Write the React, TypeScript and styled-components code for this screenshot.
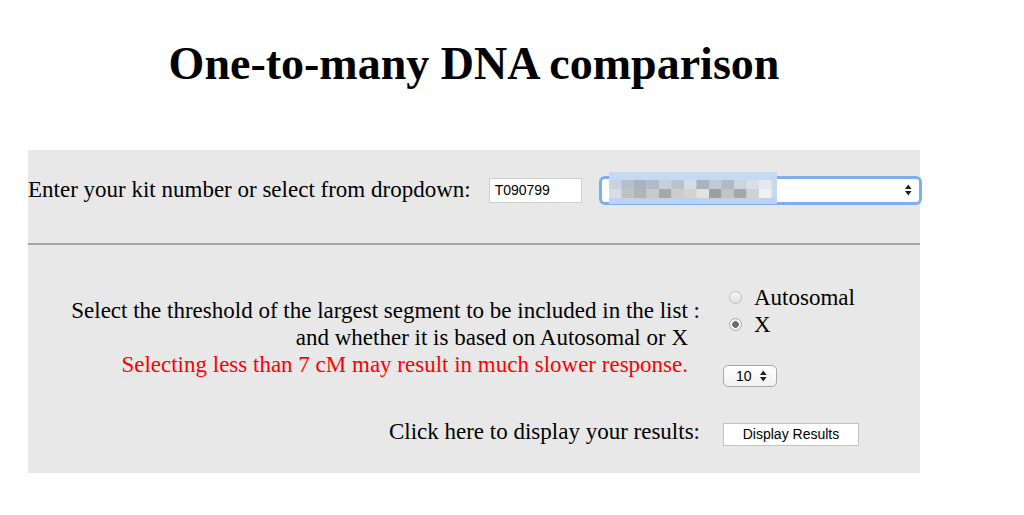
import styled, { createGlobalStyle } from "styled-components";

const GlobalStyle = createGlobalStyle`
  body {
    margin: 0;
    background: #ffffff;
    font-family: "Liberation Serif", "Times New Roman", serif;
    color: #000000;
  }
`;

const Page = styled.div`
  width: 892px;
  margin-left: 28px;
`;

const Title = styled.h1`
  margin: 0;
  padding-top: 36px;
  height: 150px;
  box-sizing: border-box;
  text-align: center;
  font-size: 46px;
  font-weight: bold;
  line-height: 56px;
`;

const Panel = styled.div`
  background: #e8e8e8;
  height: 323px;
`;

const KitRow = styled.div`
  display: flex;
  align-items: center;
  height: 93px;
  padding-bottom: 13px;
  font-size: 23px;
  box-sizing: border-box;
  white-space: nowrap;
`;

const KitLabel = styled.span`
  flex-shrink: 0;
  margin-right: 18px;
`;

const KitInput = styled.input`
  flex-shrink: 0;
  width: 93px;
  height: 25px;
  box-sizing: border-box;
  border: 1px solid #cfcfcf;
  background: #ffffff;
  padding: 0 5px;
  font-family: "Liberation Sans", Arial, sans-serif;
  font-size: 14px;
  color: #000;
  margin-right: 17px;
  outline: none;
`;

const SelectShell = styled.div`
  position: relative;
  flex-shrink: 0;
  width: 323px;
  height: 29px;
  box-sizing: border-box;
  border: 3px solid #7fadee;
  border-radius: 6px;
  background: #ffffff;
`;

const Mosaic = styled.svg`
  position: absolute;
  left: 7px;
  top: -7px;
`;

const Arrows = styled.svg`
  position: absolute;
  top: 50%;
  transform: translateY(-50%);
`;

const Divider = styled.hr`
  margin: 0;
  border: none;
  height: 2px;
  background: #a3a3a3;
`;

const OptionsGrid = styled.div`
  display: grid;
  grid-template-columns: 672px 1fr;
  column-gap: 23px;
  align-items: center;
  padding-top: 39px;
  font-size: 23px;
  line-height: 27px;
`;

const LeftCell = styled.div<{ $pad?: number }>`
  text-align: right;
  padding-top: ${({ $pad }) => $pad ?? 0}px;
`;

const IndentLine = styled.div<{ $warn?: boolean }>`
  padding-right: 12px;
  color: ${({ $warn }) => ($warn ? "#ff0000" : "inherit")};
`;

const RightCell = styled.div<{ $pad?: number }>`
  padding-top: ${({ $pad }) => $pad ?? 0}px;
`;

const RadioRow = styled.label`
  display: flex;
  align-items: center;
  gap: 12px;
  padding-left: 6px;
`;

const RadioDot = styled.span<{ $checked: boolean }>`
  width: 13px;
  height: 13px;
  box-sizing: border-box;
  border-radius: 50%;
  border: 1px solid ${({ $checked }) => ($checked ? "#a9a9a9" : "#bdbdbd")};
  background: ${({ $checked }) =>
    $checked
      ? "radial-gradient(circle, #6a6a6a 0 3px, #f2f2f2 3.5px)"
      : "linear-gradient(#f7f7f7, #e0e0e0)"};
`;

const SmallSelect = styled.div`
  position: relative;
  margin-top: 27px;
  width: 54px;
  height: 22px;
  box-sizing: border-box;
  border: 1px solid #a8a8a8;
  border-radius: 5px;
  background: linear-gradient(#ffffff, #f1f1f1);
  font-family: "Liberation Sans", Arial, sans-serif;
  font-size: 14px;
  line-height: 20px;
  padding-left: 12px;
`;

const ResultButton = styled.button`
  width: 136px;
  height: 23px;
  box-sizing: border-box;
  border: 1px solid #c2c2c2;
  background: #ffffff;
  font-family: "Liberation Sans", Arial, sans-serif;
  font-size: 14px;
  color: #000;
  padding: 0;
`;

const mosaicCells = [
  ["#c9d2de", "#b5bfcc", "#a9b2be", "#b2bbc7", "#c7cfda", "#b9c2ce", "#d6dde6", "#aab3bf", "#c1c9d4", "#b0b9c5", "#ccd4de", "#d8dfe8", "#e4e9ef"],
  ["#d9dce0", "#c2c2c2", "#b4b4b4", "#c9c9c9", "#a8a8a8", "#cdcdcd", "#d7d3cb", "#e2e2e2", "#9f9f9f", "#c4c4c4", "#a7a7a7", "#d2d2d2", "#f1f1f1"],
];

function Redacted() {
  return (
    <Mosaic width="168" height="32" viewBox="0 0 168 32">
      <rect x="0" y="0" width="168" height="32" fill="#c6d9f2" />
      <rect x="0" y="26" width="168" height="6" fill="#bcd2ef" />
      {mosaicCells.map((row, r) =>
        row.map((fill, c) => (
          <rect key={`${r}-${c}`} x={c * 12.5} y={8 + r * 9} width="12.5" height="9" fill={fill} />
        ))
      )}
    </Mosaic>
  );
}

function UpDown({ right, size }: { right: number; size: number }) {
  return (
    <Arrows style={{ right }} width={size * 0.6} height={size} viewBox="0 0 6 10">
      <path d="M3 0 L6 4 H0 Z M3 10 L6 6 H0 Z" fill="#222" />
    </Arrows>
  );
}

export default function App() {
  return (
    <>
      <GlobalStyle />
      <Page>
        <Title>One-to-many DNA comparison</Title>
        <Panel>
          <KitRow>
            <KitLabel>Enter your kit number or select from dropdown:</KitLabel>
            <KitInput defaultValue="T090799" />
            <SelectShell>
              <Redacted />
              <UpDown right={7} size={11} />
            </SelectShell>
          </KitRow>
          <Divider />
          <OptionsGrid>
            <LeftCell $pad={4}>
              <div>Select the threshold of the largest segment to be included in the list :</div>
              <IndentLine>and whether it is based on Autosomal or X</IndentLine>
              <IndentLine $warn>Selecting less than 7 cM may result in much slower response.</IndentLine>
            </LeftCell>
            <RightCell>
              <RadioRow>
                <RadioDot $checked={false} />
                Autosomal
              </RadioRow>
              <RadioRow>
                <RadioDot $checked />X
              </RadioRow>
              <SmallSelect>
                10
                <UpDown right={9} size={11} />
              </SmallSelect>
            </RightCell>
            <LeftCell $pad={31}>Click here to display your results:</LeftCell>
            <RightCell $pad={31}>
              <ResultButton>Display Results</ResultButton>
            </RightCell>
          </OptionsGrid>
        </Panel>
      </Page>
    </>
  );
}
